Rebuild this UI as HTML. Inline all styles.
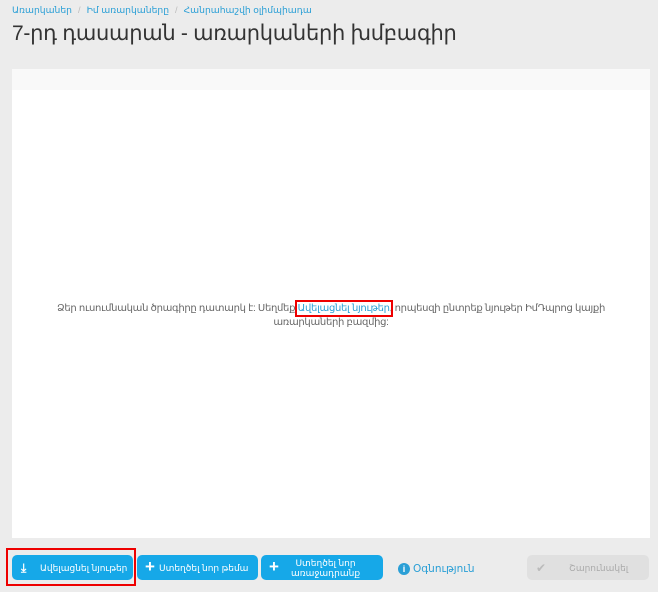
<!DOCTYPE html>
<html><head><meta charset="utf-8"><style>
*{margin:0;padding:0;box-sizing:border-box}
body{width:658px;height:592px;background:#ececec;font-family:"Liberation Sans","DejaVu Sans",sans-serif;position:relative;overflow:hidden}
.bc{position:absolute;left:12px;top:5px;font-size:9.2px;color:#2a9fd6;white-space:nowrap}
.bc span{color:#bbb;margin:0 6px}
h1{position:absolute;left:12px;top:21px;font-size:21px;font-weight:normal;color:#333;white-space:nowrap;letter-spacing:-0.3px}
.panel{position:absolute;left:12px;top:69px;width:638px;height:469px;background:#fff}
.strip{height:21px;background:#f9f9f9}
.msg{position:absolute;left:0;right:0;top:233px;text-align:center;font-size:10px;line-height:14px;color:#666;padding:0 36px;letter-spacing:-0.3px}
.msg a{color:#2a9fd6;text-decoration:none;outline:2px solid #e00;outline-offset:1px}
.btn{position:absolute;top:555px;height:25px;background:#16a8e8;border-radius:5px;color:#fff;font-size:9px;line-height:10px;white-space:nowrap}
.ic{position:absolute;left:8px;top:3px;font-size:17px;font-weight:bold;line-height:17px}
.tx{position:absolute;top:8px}
.red{position:absolute;left:6px;top:548px;width:130px;height:38px;border:2px solid #e00}
</style></head><body>
<div class="bc">Առարկաներ<span>/</span>Իմ առարկաները<span>/</span>Հանրահաշվի օլիմպիադա</div>
<h1>7-րդ դասարան - առարկաների խմբագիր</h1>
<div class="panel"><div class="strip"></div>
<div class="msg">Ձեր ուսումնական ծրագիրը դատարկ է: Սեղմեք <a>Ավելացնել նյութեր</a>, որպեսզի ընտրեք նյութեր ԻմԴպրոց կայքի առարկաների բազմից:</div></div>
<div class="red"></div>
<div class="btn" style="left:12px;width:121px"><span class="ic" style="font-size:12px;top:5px;left:9px">⤓</span><span class="tx" style="left:28px">Ավելացնել նյութեր</span></div>
<div class="btn" style="left:137px;width:121px"><span class="ic">+</span><span class="tx" style="left:22px">Ստեղծել նոր թեմա</span></div>
<div class="btn" style="left:261px;width:122px"><span class="ic">+</span><span class="tx" style="left:30px;top:3px;text-align:center">Ստեղծել նոր<br>առաջադրանք</span></div>
<div style="position:absolute;left:398px;top:563px;font-size:10.5px;color:#2a9fd6;display:flex;align-items:center"><span style="width:12px;height:12px;border-radius:50%;background:#2a9fd6;color:#fff;font-size:9px;font-weight:bold;text-align:center;line-height:12px;margin-right:3px">i</span>Օգնություն</div>
<div class="btn" style="left:527px;width:122px;background:#e0e0e0;color:#aaa"><span class="ic" style="font-size:12px;top:5px;left:9px;color:#bbb">✔</span><span class="tx" style="left:42px">Շարունակել</span></div>
</body></html>
